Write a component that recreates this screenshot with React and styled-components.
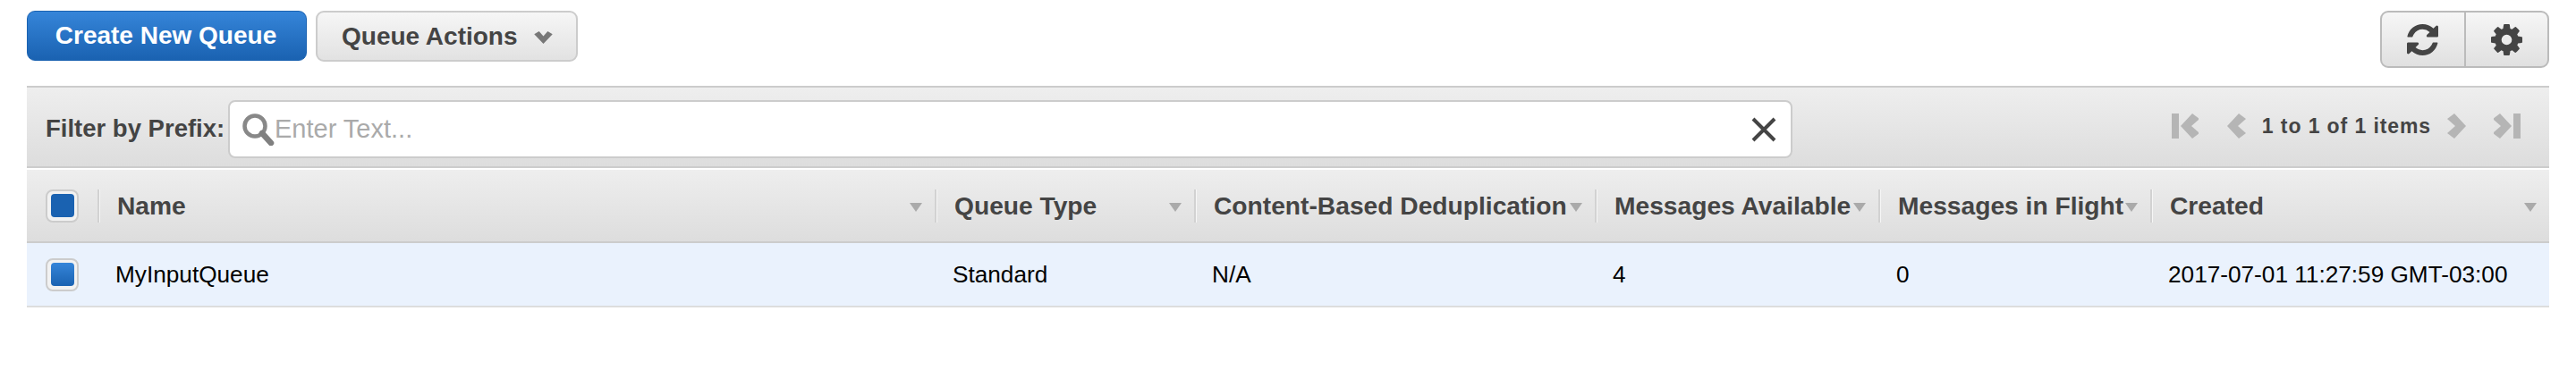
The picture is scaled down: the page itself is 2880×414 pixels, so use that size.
import React from "react";
import styled, { createGlobalStyle } from "styled-components";

const GlobalStyle = createGlobalStyle`
  html, body {
    margin: 0;
    padding: 0;
    background: #fff;
    font-family: "Liberation Sans", Arial, sans-serif;
  }
`;

const COLUMNS = "79px 936px 290px 448px 317px 304px 446px";

const Page = styled.div`
  padding: 12px 30px 0;
  height: 402px;
  overflow: hidden;
`;

const TopBar = styled.div`
  display: flex;
  align-items: flex-start;
  gap: 10px;
  height: 84px;
`;

const Button = styled.button`
  box-sizing: border-box;
  display: flex;
  align-items: center;
  height: 57px;
  padding: 0;
  border-radius: 9px;
  font: bold 28px "Liberation Sans", Arial, sans-serif;
  cursor: pointer;
`;

const PrimaryButton = styled(Button)`
  width: 313px;
  height: 56px;
  padding-right: 2px;
  justify-content: center;
  color: #fff;
  border: 1px solid #1a62b1;
  background: linear-gradient(#3585d9, #1a62b1);
`;

const ActionsButton = styled(Button)`
  width: 293px;
  padding-left: 27px;
  gap: 18px;
  color: #444;
  border: 2px solid #ccc;
  background: linear-gradient(#f6f6f6, #e2e2e2);
`;

const ActionsArrow = styled.svg`
  flex: none;
  width: 21px;
  height: 14px;
  margin-top: 2px;
`;

const IconGroup = styled.div`
  display: flex;
  box-sizing: border-box;
  margin-left: auto;
  width: 189px;
  height: 64px;
  border: 2px solid #bbb;
  border-radius: 9px;
  overflow: hidden;
  background: linear-gradient(#f6f6f6, #e0e0e0);
`;

const IconCell = styled.div`
  flex: 1;
  display: flex;
  align-items: center;
  justify-content: center;
  & + & {
    border-left: 2px solid #bbb;
  }
`;

const GroupIcon = styled.svg`
  width: 35px;
  height: 35px;
  fill: #444;
`;

const Toolbar = styled.div`
  box-sizing: border-box;
  display: flex;
  align-items: center;
  height: 92px;
  padding-left: 21px;
  border-top: 2px solid #ccc;
  border-bottom: 2px solid #ccc;
  background: linear-gradient(#eeeeee, #dddddd);
`;

const FilterLabel = styled.span`
  width: 204px;
  margin-top: 4px;
  font-size: 27.5px;
  font-weight: bold;
  color: #444;
`;

const SearchBox = styled.div`
  box-sizing: border-box;
  display: flex;
  align-items: center;
  width: 1749px;
  height: 65px;
  margin-top: 5px;
  padding: 0 16px 0 14px;
  background: #fff;
  border: 2px solid #ccc;
  border-radius: 8px;
`;

const SearchIcon = styled.svg`
  width: 36px;
  height: 36px;
  flex: none;
`;

const Placeholder = styled.span`
  flex: 1;
  font-size: 29px;
  color: #aaa;
`;

const ClearIcon = styled.svg`
  width: 28px;
  height: 28px;
`;

const Pager = styled.div`
  display: flex;
  align-items: center;
  margin-left: auto;
  margin-right: 32px;
  margin-top: -2px;
  color: #444;
`;

const PagerText = styled.span`
  margin: 0 18px;
  font-size: 23px;
  font-weight: bold;
  letter-spacing: 0.9px;
`;

const PagerIcon = styled.svg`
  display: block;
  width: ${(p) => p.$w}px;
  height: 30px;
  margin-left: ${(p) => p.$gap || 0}px;
`;

const Grid = styled.div`
  display: grid;
  grid-template-columns: ${COLUMNS};
  align-items: center;
`;

const HeaderRow = styled(Grid)`
  box-sizing: border-box;
  height: 82px;
  margin-top: 2px;
  border-bottom: 2px solid #ccc;
  background: linear-gradient(#eeeeee, #dddddd);
`;

const DataRow = styled(Grid)`
  box-sizing: border-box;
  height: 72px;
  border-bottom: 2px solid #ddd;
  background: #eaf2fd;
  color: #000;
  font-size: 26.2px;
`;

const CheckCell = styled.div`
  display: flex;
  padding-left: 21px;
`;

const Checkbox = styled.span`
  box-sizing: border-box;
  display: flex;
  align-items: center;
  justify-content: center;
  width: 37px;
  height: 37px;
  border: 2px solid #ccc;
  border-radius: 8px;
  background: #f2f2f2;
  &::after {
    content: "";
    width: 26px;
    height: 26px;
    border-radius: 4px;
    background: ${(p) => (p.$header ? "#1a62b1" : "linear-gradient(#3585d9, #1a62b1)")};
  }
`;

const HeadCell = styled.div`
  box-sizing: border-box;
  display: flex;
  align-items: center;
  justify-content: space-between;
  height: 37px;
  padding: 0 14px 0 20px;
  border-left: 2px solid #d2d2d2;
  box-shadow: inset 1px 0 0 #f6f6f6;
  font-size: 28.2px;
  font-weight: bold;
  color: #444;
  white-space: nowrap;
`;

const SortArrow = styled.i`
  flex: none;
  width: 0;
  height: 0;
  margin-top: 3px;
  border-left: 7px solid transparent;
  border-right: 7px solid transparent;
  border-top: 10px solid #aaa;
`;

const DataCell = styled.div`
  padding-left: 20px;
  white-space: nowrap;
`;

const headers = [
  "Name",
  "Queue Type",
  "Content-Based Deduplication",
  "Messages Available",
  "Messages in Flight",
  "Created",
];

const cells = ["MyInputQueue", "Standard", "N/A", "4", "0", "2017-07-01 11:27:59 GMT-03:00"];

const chevronLeft = "M13 0 L0 14 L13 28 L21 22 L12 14 L21 6 Z";

const refreshPath =
  "M1511 928q0 5-1 7-64 268-268 434.5t-478 166.5q-146 0-282.5-55t-243.5-157l-129 129q-19 19-45 19t-45-19-19-45v-448q0-26 19-45t45-19h448q26 0 45 19t19 45-19 45l-137 137q71 66 161 102t187 36q134 0 250-65t186-179q11-17 53-117 8-23 30-23h192q13 0 22.5 9.5t9.5 22.5zm25-800v448q0 26-19 45t-45 19h-448q-26 0-45-19t-19-45 19-45l138-138q-148-137-349-137-134 0-250 65t-186 179q-11 17-53 117-8 23-30 23h-199q-13 0-22.5-9.5t-9.5-22.5v-7q65-268 270-434.5t480-166.5q146 0 284 55.5t245 156.5l130-129q19-19 45-19t45 19 19 45z";

const cogPath =
  "M1024 896q0-106-75-181t-181-75-181 75-75 181 75 181 181 75 181-75 75-181zm512-109v222q0 12-8 23t-20 13l-185 28q-19 54-39 91 35 50 107 138 10 12 10 25t-9 23q-27 37-99 108t-94 71q-12 0-26-9l-138-108q-44 23-91 38-16 136-29 186-7 28-36 28h-222q-14 0-24.5-8.5t-11.5-21.5l-28-184q-49-16-90-37l-141 107q-10 9-25 9-14 0-25-11-126-114-165-168-7-10-7-23 0-12 8-23 15-21 51-66.5t54-70.5q-27-50-41-99l-183-27q-13-2-21-12.5t-8-23.5v-222q0-12 8-23t19-13l186-28q14-46 39-92-40-57-107-138-10-12-10-24 0-10 9-23 26-36 98.5-107.5t94.5-71.5q13 0 26 10l138 107q44-23 91-38 16-136 29-186 7-28 36-28h222q14 0 24.5 8.5t11.5 21.5l28 184q49 16 90 37l142-107q9-9 24-9 13 0 25 10 129 119 165 170 7 8 7 22 0 12-8 23-15 21-51 66.5t-54 70.5q26 50 41 98l183 28q13 2 21 12.5t8 23.5z";

const App = () => {
  return (
    <Page>
      <GlobalStyle />
      <TopBar>
        <PrimaryButton>Create New Queue</PrimaryButton>
        <ActionsButton>
          Queue Actions
          <ActionsArrow viewBox="0 0 19 13">
            <path d="M0 3 L5 0 L9.5 5 L14 0 L19 3 L9.5 13 Z" fill="#777" />
          </ActionsArrow>
        </ActionsButton>
        <IconGroup>
          <IconCell>
            <GroupIcon viewBox="0 0 1536 1536">
              <path d={refreshPath} />
            </GroupIcon>
          </IconCell>
          <IconCell>
            <GroupIcon viewBox="0 128 1536 1536">
              <path d={cogPath} />
            </GroupIcon>
          </IconCell>
        </IconGroup>
      </TopBar>

      <Toolbar>
        <FilterLabel>Filter by Prefix:</FilterLabel>
        <SearchBox>
          <SearchIcon viewBox="0 0 36 36">
            <circle cx="14" cy="14" r="11.5" fill="none" stroke="#888" strokeWidth="4.5" />
            <path d="M22 22 L32 33" stroke="#808080" strokeWidth="6.5" strokeLinecap="round" />
          </SearchIcon>
          <Placeholder>Enter Text...</Placeholder>
          <ClearIcon viewBox="0 0 28 28">
            <path d="M2 2 L26 26 M26 2 L2 26" stroke="#444" strokeWidth="4" />
          </ClearIcon>
        </SearchBox>
        <Pager>
          <PagerIcon $w={30} viewBox="0 0 30 30">
            <rect x="0" y="1" width="8" height="28" fill="#b5b5b5" />
            <path transform="translate(10 1)" d={chevronLeft} fill="#b5b5b5" />
          </PagerIcon>
          <PagerIcon $w={21} $gap={32} viewBox="0 0 21 30">
            <path transform="translate(0 1)" d={chevronLeft} fill="#b5b5b5" />
          </PagerIcon>
          <PagerText>1 to 1 of 1 items</PagerText>
          <PagerIcon $w={21} viewBox="0 0 21 30">
            <path transform="translate(21 1) scale(-1 1)" d={chevronLeft} fill="#b5b5b5" />
          </PagerIcon>
          <PagerIcon $w={30} $gap={31} viewBox="0 0 30 30">
            <path transform="translate(20 1) scale(-1 1)" d={chevronLeft} fill="#b5b5b5" />
            <rect x="22" y="1" width="8" height="28" fill="#b5b5b5" />
          </PagerIcon>
        </Pager>
      </Toolbar>

      <HeaderRow>
        <CheckCell>
          <Checkbox $header />
        </CheckCell>
        {headers.map((label) => (
          <HeadCell key={label}>
            {label}
            <SortArrow />
          </HeadCell>
        ))}
      </HeaderRow>
      <DataRow>
        <CheckCell>
          <Checkbox />
        </CheckCell>
        {cells.map((value) => (
          <DataCell key={value}>{value}</DataCell>
        ))}
      </DataRow>
    </Page>
  );
};

export default App;
